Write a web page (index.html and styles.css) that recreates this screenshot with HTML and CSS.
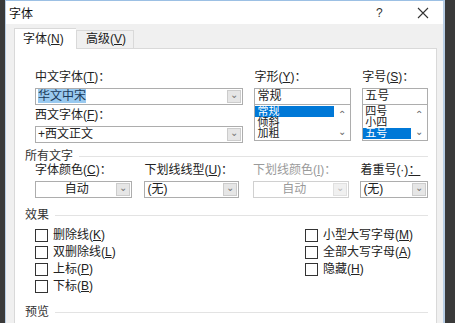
FILE: index.html
```html
<!DOCTYPE html>
<html lang="zh-CN">
    <head>
        <meta charset="UTF-8">
        <title>字体</title>
        <link rel="stylesheet" href="styles.css">
    </head>
    <body>
        <div class="dialog">
            <div class="titlebar">
                <span class="title">字体</span>
                <span class="help">?</span>
                <span class="close">
                    <svg width="12" height="12" viewBox="0 0 12 12"><path d="M1 1 L11 11 M11 1 L1 11" stroke="#333" stroke-width="1.1" fill="none"/></svg>
                </span>
            </div>
            <div class="body">
                <div class="tabs">
                    <div class="tab active">字体(<u>N</u>)</div>
                    <div class="tab">高级(<u>V</u>)</div>
                </div>
                <div class="panel">
                    <div class="font-grid">
                        <div class="field col-wide">
                            <div class="label">中文字体(<u>T</u>)：</div>
                            <div class="combo">
                                <span class="value"><span class="sel-text">华文中宋</span></span>
                                <span class="arrow">⌄</span>
                            </div>
                            <div class="label second">西文字体(<u>F</u>)：</div>
                            <div class="combo">
                                <span class="value">+西文正文</span>
                                <span class="arrow">⌄</span>
                            </div>
                        </div>
                        <div class="field col-mid">
                            <div class="label">字形(<u>Y</u>)：</div>
                            <div class="edit">常规</div>
                            <div class="listbox">
                                <div class="items">
                                    <div class="item selected">常规</div>
                                    <div class="item">倾斜</div>
                                    <div class="item">加粗</div>
                                </div>
                                <div class="scroll"><span>⌃</span><span>⌄</span></div>
                            </div>
                        </div>
                        <div class="field col-narrow">
                            <div class="label">字号(<u>S</u>)：</div>
                            <div class="edit">五号</div>
                            <div class="listbox">
                                <div class="items">
                                    <div class="item">四号</div>
                                    <div class="item">小四</div>
                                    <div class="item selected">五号</div>
                                </div>
                                <div class="scroll"><span>⌃</span><span>⌄</span></div>
                            </div>
                        </div>
                    </div>

                    <div class="group g-all">所有文字</div>
                    <div class="all-text">
                        <div class="field w-color">
                            <div class="label">字体颜色(<u>C</u>)：</div>
                            <div class="combo center">
                                <span class="value">自动</span>
                                <span class="arrow">⌄</span>
                            </div>
                        </div>
                        <div class="field w-line">
                            <div class="label">下划线线型(<u>U</u>)：</div>
                            <div class="combo">
                                <span class="value">(无)</span>
                                <span class="arrow">⌄</span>
                            </div>
                        </div>
                        <div class="field w-mid disabled">
                            <div class="label">下划线颜色(<u>I</u>)：</div>
                            <div class="combo center">
                                <span class="value">自动</span>
                                <span class="arrow">⌄</span>
                            </div>
                        </div>
                        <div class="field w-narrow">
                            <div class="label">着重号(·)<u>：</u></div>
                            <div class="combo">
                                <span class="value">(无)</span>
                                <span class="arrow">⌄</span>
                            </div>
                        </div>
                    </div>

                    <div class="group g-effects">效果</div>
                    <div class="effects">
                        <div class="effect-col left">
                            <label class="check"><span class="box"></span><span>删除线(<u>K</u>)</span></label>
                            <label class="check"><span class="box"></span><span>双删除线(<u>L</u>)</span></label>
                            <label class="check"><span class="box"></span><span>上标(<u>P</u>)</span></label>
                            <label class="check"><span class="box"></span><span>下标(<u>B</u>)</span></label>
                        </div>
                        <div class="effect-col">
                            <label class="check"><span class="box"></span><span>小型大写字母(<u>M</u>)</span></label>
                            <label class="check"><span class="box"></span><span>全部大写字母(<u>A</u>)</span></label>
                            <label class="check"><span class="box"></span><span>隐藏(<u>H</u>)</span></label>
                        </div>
                    </div>

                    <div class="group g-preview">预览</div>
                </div>
            </div>
        </div>
    </body>
</html>
```

FILE: styles.css
```css
body {
    margin: 0px;
    padding: 0px;
    background-color: #3a3a3a;
    font-family: "Liberation Sans", "Noto Sans CJK SC", sans-serif;
    font-size: 12px;
    color: #222;
    height: 323px;
    overflow: hidden;
    text-autospace: no-autospace;
}
u {
    text-decoration: underline;
    text-underline-offset: 1px;
}
.dialog {
    margin-left: 5px;
    width: 440px;
    height: 323px;
    border-left: 1px solid #b8cde4;
    border-right: 2px solid #b8cde4;
    border-top: 1px solid #9cc0e4;
    background-color: #f0f0f0;
    box-sizing: border-box;
    overflow: hidden;
}
.titlebar {
    height: 23px;
    background-color: #fff;
    display: flex;
    align-items: center;
    padding-left: 3px;
}
.title {
    flex: 1;
    color: #111;
}
.help {
    width: 14px;
    margin-right: 27px;
    font-size: 12px;
    color: #333;
}
.close {
    width: 12px;
    margin-right: 14px;
    display: flex;
}
.body {
    padding: 4px 6px 0px 8px;
}
.tabs {
    display: flex;
    align-items: flex-end;
    height: 20px;
}
.tab {
    height: 18px;
    line-height: 17px;
    width: 58px;
    padding-left: 9px;
    box-sizing: border-box;
    border: 1px solid #d9d9d9;
    border-bottom: none;
    background-color: #f0f0f0;
    color: #222;
}
.tab.active {
    height: 21px;
    line-height: 20px;
    width: 62px;
    padding-left: 8px;
    background-color: #fff;
    position: relative;
    top: 1px;
    border-right: none;
}
.panel {
    background-color: #fff;
    border: 1px solid #d9d9d9;
    height: 300px;
    padding: 21px 8px 0px 10px;
}

/* top: font lists */
.font-grid {
    display: flex;
    gap: 11px;
    padding-left: 10px;
}
.col-wide { width: 209px; }
.col-mid { width: 97px; }
.col-narrow { width: 66px; }
.label {
    height: 15px;
    line-height: 15px;
    margin-bottom: 3px;
    white-space: nowrap;
}
.label.second {
    margin-top: 3px;
}
.combo {
    display: flex;
    height: 17px;
    border: 1px solid #adadad;
    box-sizing: border-box;
    background-color: #fff;
}
.combo .value {
    flex: 1;
    line-height: 15px;
    padding-left: 2px;
    white-space: nowrap;
}
.combo.center .value {
    text-align: center;
}
.sel-text {
    background-color: #99c9ef;
    color: #1a3a5a;
}
.combo .arrow {
    width: 14px;
    margin: 1px;
    background-color: #e6e6e6;
    border: 1px solid #ccc;
    box-sizing: border-box;
    color: #777;
    font-size: 10px;
    line-height: 7px;
    text-align: center;
}
.edit {
    height: 17px;
    line-height: 15px;
    border: 1px solid #adadad;
    box-sizing: border-box;
    padding-left: 2px;
}
.listbox {
    display: flex;
    height: 36px;
    border: 1px solid #adadad;
    border-top: none;
    box-sizing: border-box;
}
.items {
    flex: 1;
    padding-top: 1px;
}
.item {
    height: 11px;
    line-height: 11px;
    font-size: 11px;
    padding-left: 2px;
    color: #222;
}
.item.selected {
    background-color: #0078d7;
    color: #fff;
}
.scroll {
    width: 16px;
    display: flex;
    flex-direction: column;
    justify-content: space-between;
    align-items: center;
    color: #666;
    font-size: 10px;
    line-height: 12px;
    padding: 4px 0px 2px 0px;
}

/* group headings */
.group {
    display: flex;
    align-items: center;
    gap: 6px;
    height: 14px;
    line-height: 14px;
    color: #333;
}
.group::after {
    content: "";
    flex: 1;
    border-top: 1px solid #e3e3e3;
}
.g-all { margin-top: 6px; }
.g-effects { margin-top: 10px; }
.g-preview { margin-top: 12px; }

.all-text {
    display: flex;
    padding-left: 10px;
}
.w-color { width: 98px; margin-right: 12px; }
.w-line { width: 95px; margin-right: 14px; }
.w-mid { width: 97px; margin-right: 11px; }
.w-narrow { width: 68px; }
.disabled .label,
.disabled .combo .value {
    color: #9a9a9a;
}
.disabled .combo {
    border-color: #d0d0d0;
}
.disabled .combo .arrow {
    background-color: #f0f0f0;
    border-color: #e0e0e0;
    color: #bbb;
}

/* effects */
.effects {
    display: flex;
    padding-left: 10px;
    margin-top: 7px;
}
.effect-col {
    display: flex;
    flex-direction: column;
    gap: 4px;
}
.effect-col.left {
    width: 270px;
    flex-shrink: 0;
}
.check {
    display: flex;
    align-items: center;
    height: 13px;
    line-height: 13px;
    gap: 5px;
    color: #222;
    white-space: nowrap;
}
.box {
    width: 11px;
    height: 11px;
    border: 1px solid #333;
    background-color: #fff;
}
```
